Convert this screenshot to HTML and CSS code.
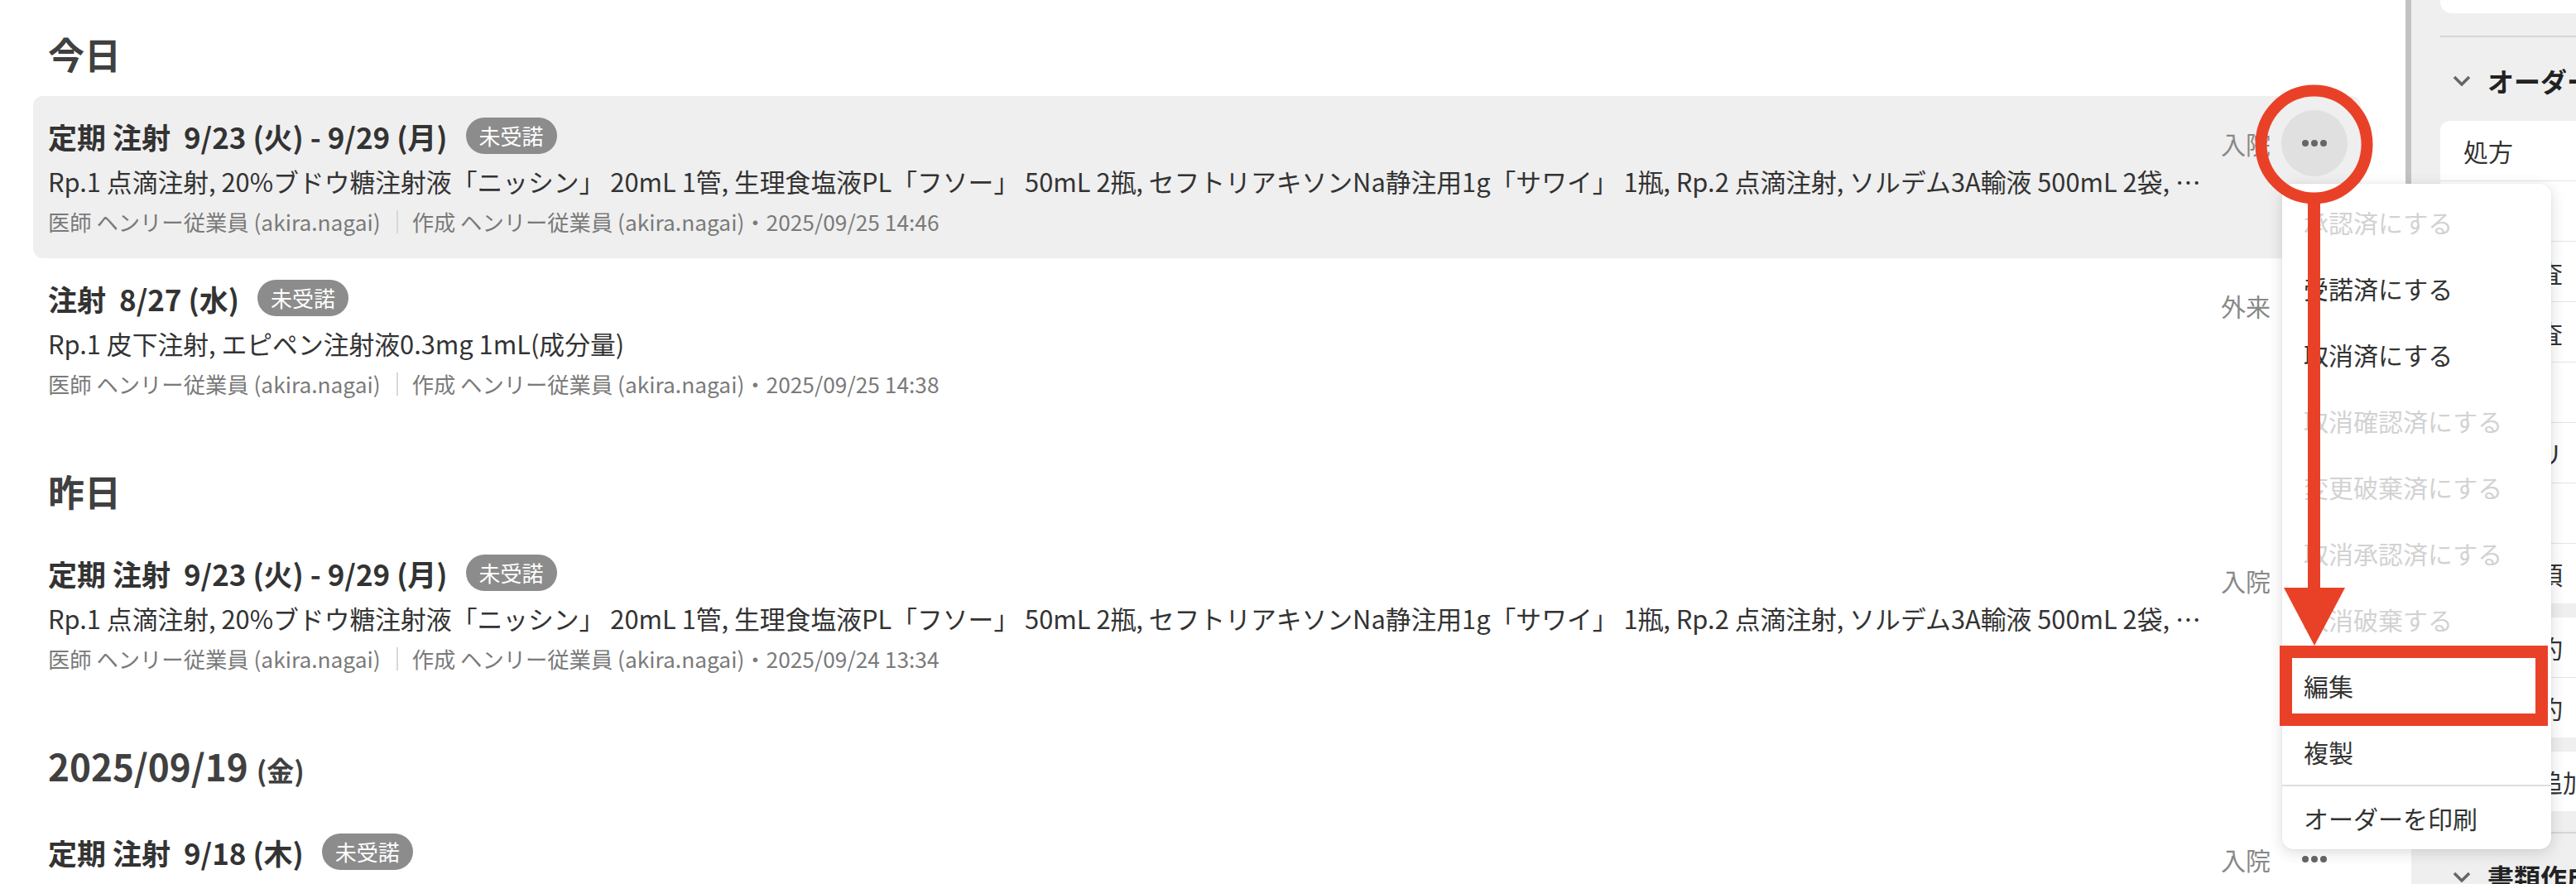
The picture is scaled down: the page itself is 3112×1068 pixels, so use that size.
FILE: index.html
```html
<!DOCTYPE html>
<html lang="ja">
<head>
<meta charset="utf-8">
<title>オーダー履歴</title>
<link rel="stylesheet" href="styles.css">
</head>
<body>
<div class="app">
  <main class="timeline">
    <section class="day">
      <h2 class="day-title">今日</h2>
      <article class="order is-hover">
        <div class="order-body">
          <div class="order-title"><span class="kind">定期 注射</span><span class="date">9/23 (火) - 9/29 (月)</span><span class="badge">未受諾</span></div>
          <p class="order-desc">Rp.1 点滴注射, 20%ブドウ糖注射液「ニッシン」 20mL 1管, 生理食塩液PL「フソー」 50mL 2瓶, セフトリアキソンNa静注用1g「サワイ」 1瓶, Rp.2 点滴注射, ソルデム3A輸液 500mL 2袋, …</p>
          <p class="order-meta"><span>医師 ヘンリー従業員 (akira.nagai)</span><span class="sep"></span><span>作成 ヘンリー従業員 (akira.nagai)・2025/09/25 14:46</span></p>
        </div>
        <div class="order-aside">
          <span class="visit">入院</span>
          <span class="more"><svg width="30" height="8" viewBox="0 0 30 8"><circle cx="4" cy="4" r="4"/><circle cx="15" cy="4" r="4"/><circle cx="26" cy="4" r="4"/></svg></span>
        </div>
      </article>
      <article class="order">
        <div class="order-body">
          <div class="order-title"><span class="kind">注射</span><span class="date">8/27 (水)</span><span class="badge">未受諾</span></div>
          <p class="order-desc">Rp.1 皮下注射, エピペン注射液0.3mg 1mL(成分量)</p>
          <p class="order-meta"><span>医師 ヘンリー従業員 (akira.nagai)</span><span class="sep"></span><span>作成 ヘンリー従業員 (akira.nagai)・2025/09/25 14:38</span></p>
        </div>
        <div class="order-aside">
          <span class="visit">外来</span>
          <span class="more"><svg width="30" height="8" viewBox="0 0 30 8"><circle cx="4" cy="4" r="4"/><circle cx="15" cy="4" r="4"/><circle cx="26" cy="4" r="4"/></svg></span>
        </div>
      </article>
    </section>

    <section class="day">
      <h2 class="day-title">昨日</h2>
      <article class="order">
        <div class="order-body">
          <div class="order-title"><span class="kind">定期 注射</span><span class="date">9/23 (火) - 9/29 (月)</span><span class="badge">未受諾</span></div>
          <p class="order-desc">Rp.1 点滴注射, 20%ブドウ糖注射液「ニッシン」 20mL 1管, 生理食塩液PL「フソー」 50mL 2瓶, セフトリアキソンNa静注用1g「サワイ」 1瓶, Rp.2 点滴注射, ソルデム3A輸液 500mL 2袋, …</p>
          <p class="order-meta"><span>医師 ヘンリー従業員 (akira.nagai)</span><span class="sep"></span><span>作成 ヘンリー従業員 (akira.nagai)・2025/09/24 13:34</span></p>
        </div>
        <div class="order-aside">
          <span class="visit">入院</span>
          <span class="more"><svg width="30" height="8" viewBox="0 0 30 8"><circle cx="4" cy="4" r="4"/><circle cx="15" cy="4" r="4"/><circle cx="26" cy="4" r="4"/></svg></span>
        </div>
      </article>
    </section>

    <section class="day">
      <h2 class="day-title">2025/09/19 <small>(金)</small></h2>
      <article class="order">
        <div class="order-body">
          <div class="order-title"><span class="kind">定期 注射</span><span class="date">9/18 (木)</span><span class="badge">未受諾</span></div>
          <p class="order-desc">Rp.1 点滴注射, ソルデム3A輸液 500mL 2袋</p>
          <p class="order-meta"><span>医師 ヘンリー従業員 (akira.nagai)</span><span class="sep"></span><span>作成 ヘンリー従業員 (akira.nagai)・2025/09/18 10:12</span></p>
        </div>
        <div class="order-aside">
          <span class="visit">入院</span>
          <span class="more"><svg width="30" height="8" viewBox="0 0 30 8"><circle cx="4" cy="4" r="4"/><circle cx="15" cy="4" r="4"/><circle cx="26" cy="4" r="4"/></svg></span>
        </div>
      </article>
    </section>
    <div class="scroll-thumb"></div>
  </main>

  <aside class="side">
    <div class="side-inner">
      <div class="side-top"></div>
      <div class="side-section">
        <div class="side-head"><svg width="22" height="13" viewBox="0 0 22 13"><path d="M2 2 L11 11 L20 2" fill="none" stroke="#666" stroke-width="3.5"/></svg><span>オーダー作成</span></div>
        <ul class="side-card">
          <li>処方</li>
          <li>注射</li>
          <li>検体検査</li>
          <li>画像検査</li>
          <li>処置</li>
          <li>リハビリ</li>
          <li>食事</li>
          <li>指示事項</li>
        </ul>
        <ul class="side-card">
          <li>診察予約</li>
          <li>検査予約</li>
        </ul>
        <ul class="side-card">
          <li>セット追加</li>
        </ul>
      </div>
      <div class="side-section">
        <div class="side-head"><svg width="22" height="13" viewBox="0 0 22 13"><path d="M2 2 L11 11 L20 2" fill="none" stroke="#666" stroke-width="3.5"/></svg><span>書類作成</span></div>
      </div>
    </div>
  </aside>
</div>

<ul class="menu">
  <li class="off">承認済にする</li>
  <li>受諾済にする</li>
  <li>取消済にする</li>
  <li class="off">取消確認済にする</li>
  <li class="off">変更破棄済にする</li>
  <li class="off">取消承認済にする</li>
  <li class="off">取消破棄する</li>
  <li>編集</li>
  <li>複製</li>
  <li class="print">オーダーを印刷</li>
</ul>

<svg class="annot" width="3112" height="1068" viewBox="0 0 3112 1068">
  <ellipse cx="2795.5" cy="174.5" rx="64" ry="65" fill="none" stroke="#e94128" stroke-width="14"/>
  <rect x="2788" y="244" width="15" height="470" fill="#e94128"/>
  <polygon points="2759,710 2833,710 2796,780" fill="#e94128"/>
  <rect x="2761.5" y="787.5" width="309" height="82" fill="none" stroke="#e94128" stroke-width="15"/>
</svg>
</body>
</html>
```

FILE: styles.css
```css
* { box-sizing: border-box; }
html, body { margin: 0; padding: 0; }
body {
  width: 3112px;
  height: 1068px;
  overflow: hidden;
  position: relative;
  background: #fff;
  font-family: "Noto Sans CJK JP", "Noto Sans", sans-serif;
  color: #333;
}
.app { display: flex; height: 1068px; }

/* timeline */
.timeline {
  width: 2913px;
  flex: none;
  position: relative;
  overflow: hidden;
  padding: 32px 61px 0 40px;
}
.scroll-thumb {
  position: absolute;
  top: 0;
  right: 0;
  width: 7px;
  height: 640px;
  background: #c2c2c2;
  border-radius: 0 0 4px 4px;
}
.day + .day { margin-top: 52px; }
.day-title {
  margin: 0 0 18px;
  padding-left: 18px;
  font-size: 44px;
  line-height: 66px;
  font-weight: 700;
  color: #404040;
}
.day-title small { font-size: 33px; }

.order {
  display: flex;
  gap: 12px;
  padding: 24px 16px 26px 18px;
  border-radius: 12px;
}
.order.is-hover { background: #efefef; }
.order-body { flex: 1; min-width: 0; }
.order-title {
  display: flex;
  align-items: center;
  height: 48px;
  font-size: 35px;
  font-weight: 700;
  color: #333;
  white-space: nowrap;
}
.date { margin-left: 16px; }
.badge {
  margin-left: 22px;
  height: 44px;
  padding: 0 16px;
  border-radius: 22px;
  background: #8c8c8c;
  color: #fff;
  font-size: 26px;
  font-weight: 400;
  line-height: 44px;
}
.order-desc {
  margin: 8px 0 0;
  font-size: 30.8px;
  line-height: 45px;
  white-space: nowrap;
  overflow: hidden;
  text-overflow: ellipsis;
  color: #333;
}
.order-meta {
  margin: 9px 0 0;
  display: flex;
  align-items: center;
  font-size: 26.3px;
  line-height: 36px;
  color: #7a7a7a;
  white-space: nowrap;
}
.sep {
  width: 2px;
  height: 28px;
  background: #d8d8d8;
  margin: 0 17px 0 19px;
}
.order-aside {
  display: flex;
  align-items: center;
  gap: 13px;
  margin-top: -7px;
  align-self: flex-start;
}
.visit { font-size: 30px; line-height: 40px; color: #888; }
.more {
  width: 80px;
  height: 80px;
  border-radius: 50%;
  display: flex;
  align-items: center;
  justify-content: center;
}
.more svg { fill: #666; }
.is-hover .more { background: #e0e0e0; }

/* side panel */
.side { flex: 1; background: #efefef; overflow: hidden; }
.side-inner { width: 480px; padding-left: 35px; }
.side-top { height: 16px; background: #fff; border-radius: 0 0 0 14px; }
.side-section { margin-top: 27px; border-top: 2px solid #d6d6d6; }
.side-section + .side-section { margin-top: 25px; }
.side-head {
  height: 101px;
  padding: 3px 0 0 15px;
  display: flex;
  align-items: center;
  gap: 20px;
  font-size: 32px;
  font-weight: 700;
  color: #222;
  white-space: nowrap;
}
.side-card {
  list-style: none;
  margin: 0 0 17px;
  padding: 0;
  background: #fff;
  border-radius: 12px 0 0 12px;
}
.side-card li {
  height: 72px;
  padding-left: 28px;
  display: flex;
  align-items: center;
  font-size: 30px;
  color: #333;
  white-space: nowrap;
}
.side-card li + li { height: 73px; border-top: 1px solid #e4e4e4; }

/* context menu */
.menu {
  position: absolute;
  left: 2757px;
  top: 222px;
  width: 325px;
  margin: 0;
  padding: 6px 0 0;
  list-style: none;
  background: #fff;
  border-radius: 14px;
  box-shadow: 0 4px 18px rgba(0, 0, 0, 0.14), 0 0 2px rgba(0, 0, 0, 0.08);
}
.menu li {
  height: 80px;
  padding-left: 26px;
  display: flex;
  align-items: center;
  font-size: 30px;
  color: #333;
}
.menu li.off { color: #d2d2d2; }
.menu li.print { height: 78px; border-top: 2px solid #dedede; }

/* annotation overlay */
.annot { position: absolute; left: 0; top: 0; pointer-events: none; }
```
